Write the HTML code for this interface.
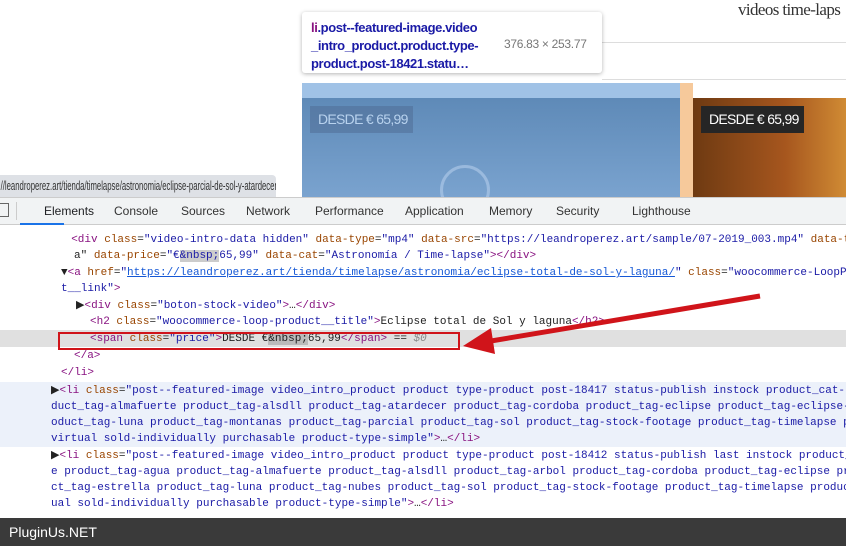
<!DOCTYPE html>
<html><head><meta charset="utf-8"><style>
*{margin:0;padding:0;box-sizing:border-box}
body{width:846px;height:546px;overflow:hidden;position:relative;background:#fff;font-family:"Liberation Sans",sans-serif}
.a{position:absolute}
.code{font-family:"Liberation Mono",monospace;font-size:11px;white-space:pre;color:#222;line-height:16px}
.t{color:#881280}.n{color:#994500}.v{color:#1a1aa6}.g{color:#888}
</style></head><body>
<div class="a" style="left:738px;top:0;font-family:'Liberation Serif',serif;font-size:17px;color:#333;white-space:nowrap;letter-spacing:-.6px">videos time-laps</div>
<div class="a" style="left:602px;top:42px;width:244px;height:1px;background:#ddd"></div>
<div class="a" style="left:602px;top:79px;width:244px;height:1px;background:#ddd"></div>
<!-- images -->
<div class="a" style="left:302px;top:83px;width:378px;height:114px;background:linear-gradient(#5a86b4,#7aa3cf)"></div>
<div class="a" style="left:302px;top:83px;width:378px;height:15px;background:#a0c2e6"></div>
<div class="a" style="left:680px;top:83px;width:13px;height:114px;background:#f6c99b"></div>
<div class="a" style="left:693px;top:98px;width:153px;height:99px;background:linear-gradient(90deg,#6e3a12,#a6561e 60%,#d08b34)"></div>
<div class="a" style="left:310px;top:106px;width:103px;height:27px;background:rgba(80,110,150,.55);color:#b8d2ee;font-size:14px;line-height:27px;padding-left:8px;letter-spacing:-.7px">DESDE € 65,99</div>
<div class="a" style="left:701px;top:106px;width:103px;height:27px;background:#262626;color:#fff;font-size:14px;line-height:27px;padding-left:8px;letter-spacing:-.7px">DESDE € 65,99</div>
<div class="a" style="left:440px;top:165px;width:50px;height:50px;border:3px solid rgba(180,205,235,.6);border-radius:50%"></div>
<!-- tooltip -->
<div class="a" style="left:302px;top:12px;width:300px;height:61px;background:#fff;border-radius:3px;box-shadow:0 1px 4px rgba(0,0,0,.3)"></div>
<div class="a" style="left:311px;top:19px;font-size:13px;font-weight:bold;color:#1a1aa6;line-height:18px;letter-spacing:-.4px"><span style="color:#881280">li</span>.post--featured-image.video<br>_intro_product.product.type-<br>product.post-18421.statu…</div>
<div class="a" style="left:504px;top:37px;font-size:12px;color:#777;letter-spacing:-.3px">376.83 × 253.77</div>
<!-- status bar -->
<div class="a" style="left:0;top:175px;width:276px;height:23px;background:#dee1e6;border-radius:0 4px 0 0;overflow:hidden"><div style="font-size:13px;color:#333;line-height:22px;padding-left:1px;white-space:nowrap;transform:scaleX(.595);transform-origin:0 0">//leandroperez.art/tienda/timelapse/astronomia/eclipse-parcial-de-sol-y-atardecer/</div></div>
<!-- tabs -->
<div class="a" style="left:0;top:197px;width:846px;height:28px;background:#f1f3f4;border-top:1px solid #ccc;border-bottom:1px solid #ccc"></div>
<div class="a" style="left:0;top:203px;width:9px;height:14px;border:1px solid #666;border-left:none"></div>
<div class="a" style="left:16px;top:202px;width:1px;height:18px;background:#ccc"></div>
<div class="a" style="left:20px;top:223px;width:44px;height:2px;background:#1a73e8"></div>
<div class="a" style="top:204px;font-size:12px;color:#333;left:0;width:846px;height:16px">
<span class="a" style="left:44px;color:#202124">Elements</span><span class="a" style="left:114px">Console</span><span class="a" style="left:181px">Sources</span><span class="a" style="left:246px">Network</span><span class="a" style="left:315px">Performance</span><span class="a" style="left:405px">Application</span><span class="a" style="left:489px">Memory</span><span class="a" style="left:556px">Security</span><span class="a" style="left:632px">Lighthouse</span></div>
<!-- code -->
<div class="a" style="left:0;top:330px;width:846px;height:17px;background:#e0e0e0"></div>
<div class="a" style="left:0;top:382px;width:846px;height:65px;background:#ecf1fa"></div>
<div class="a code" style="left:58px;top:232px"><span class="t">  &lt;div</span> <span class="n">class</span>=<span class="v">"video-intro-data hidden"</span> <span class="n">data-type</span>=<span class="v">"mp4"</span> <span class="n">data-src</span>=<span class="v">"https://leandroperez.art/sample/07-2019_003.mp4"</span> <span class="n">data-t</span></div>
<div class="a code" style="left:74px;top:248px">a" <span class="n">data-price</span>=<span class="v">"€<span style="background:#ccc">&amp;nbsp;</span>65,99"</span> <span class="n">data-cat</span>=<span class="v">"Astronomía / Time-lapse"</span><span class="t">&gt;&lt;/div&gt;</span></div>
<div class="a code" style="left:61px;top:265px">▼<span class="t">&lt;a</span> <span class="n">href</span>=<span class="v">"<u style="color:#1558d6">https://leandroperez.art/tienda/timelapse/astronomia/eclipse-total-de-sol-y-laguna/</u>"</span> <span class="n">class</span>=<span class="v">"woocommerce-LoopP</span></div>
<div class="a code" style="left:61px;top:281px"><span class="v">t__link"</span><span class="t">&gt;</span></div>
<div class="a code" style="left:76px;top:298px">▶<span class="t">&lt;div</span> <span class="n">class</span>=<span class="v">"boton-stock-video"</span><span class="t">&gt;</span>…<span class="t">&lt;/div&gt;</span></div>
<div class="a code" style="left:90px;top:314px"><span class="t">&lt;h2</span> <span class="n">class</span>=<span class="v">"woocommerce-loop-product__title"</span><span class="t">&gt;</span>Eclipse total de Sol y laguna<span class="t">&lt;/h2&gt;</span></div>
<div class="a code" style="left:90px;top:331px"><span class="t">&lt;span</span> <span class="n">class</span>=<span class="v">"price"</span><span class="t">&gt;</span>DESDE €<span style="background:#bbb">&amp;nbsp;</span>65,99<span class="t">&lt;/span&gt;</span> == <i class="g">$0</i></div>
<div class="a" style="left:58px;top:332px;width:402px;height:18px;border:2px solid #d0141a"></div>
<div class="a code" style="left:74px;top:348px"><span class="t">&lt;/a&gt;</span></div>
<div class="a code" style="left:61px;top:365px"><span class="t">&lt;/li&gt;</span></div>
<div class="a code" style="left:51px;top:383px">▶<span class="t">&lt;li</span> <span class="n">class</span>=<span class="v">"post--featured-image video_intro_product product type-product post-18417 status-publish instock product_cat-</span></div>
<div class="a code v" style="left:51px;top:399px">duct_tag-almafuerte product_tag-alsdll product_tag-atardecer product_tag-cordoba product_tag-eclipse product_tag-eclipse-</div>
<div class="a code v" style="left:51px;top:415px">oduct_tag-luna product_tag-montanas product_tag-parcial product_tag-sol product_tag-stock-footage product_tag-timelapse p</div>
<div class="a code" style="left:51px;top:431px"><span class="v">virtual sold-individually purchasable product-type-simple"</span><span class="t">&gt;</span>…<span class="t">&lt;/li&gt;</span></div>
<div class="a code" style="left:51px;top:448px">▶<span class="t">&lt;li</span> <span class="n">class</span>=<span class="v">"post--featured-image video_intro_product product type-product post-18412 status-publish last instock product_</span></div>
<div class="a code v" style="left:51px;top:464px">e product_tag-agua product_tag-almafuerte product_tag-alsdll product_tag-arbol product_tag-cordoba product_tag-eclipse pr</div>
<div class="a code v" style="left:51px;top:480px">ct_tag-estrella product_tag-luna product_tag-nubes product_tag-sol product_tag-stock-footage product_tag-timelapse produc</div>
<div class="a code" style="left:51px;top:496px"><span class="v">ual sold-individually purchasable product-type-simple"</span><span class="t">&gt;</span>…<span class="t">&lt;/li&gt;</span></div>
<!-- arrow -->
<svg class="a" style="left:455px;top:290px" width="310" height="70"><line x1="305" y1="6" x2="30" y2="52" stroke="#d0141a" stroke-width="5"/><polygon points="8,56 36,38 40,64" fill="#d0141a"/></svg>
<!-- footer -->
<div class="a" style="left:0;top:518px;width:846px;height:28px;background:#3a3a3a;color:#fff;font-size:14px;line-height:28px;padding-left:9px">PluginUs.NET</div>
</body></html>
